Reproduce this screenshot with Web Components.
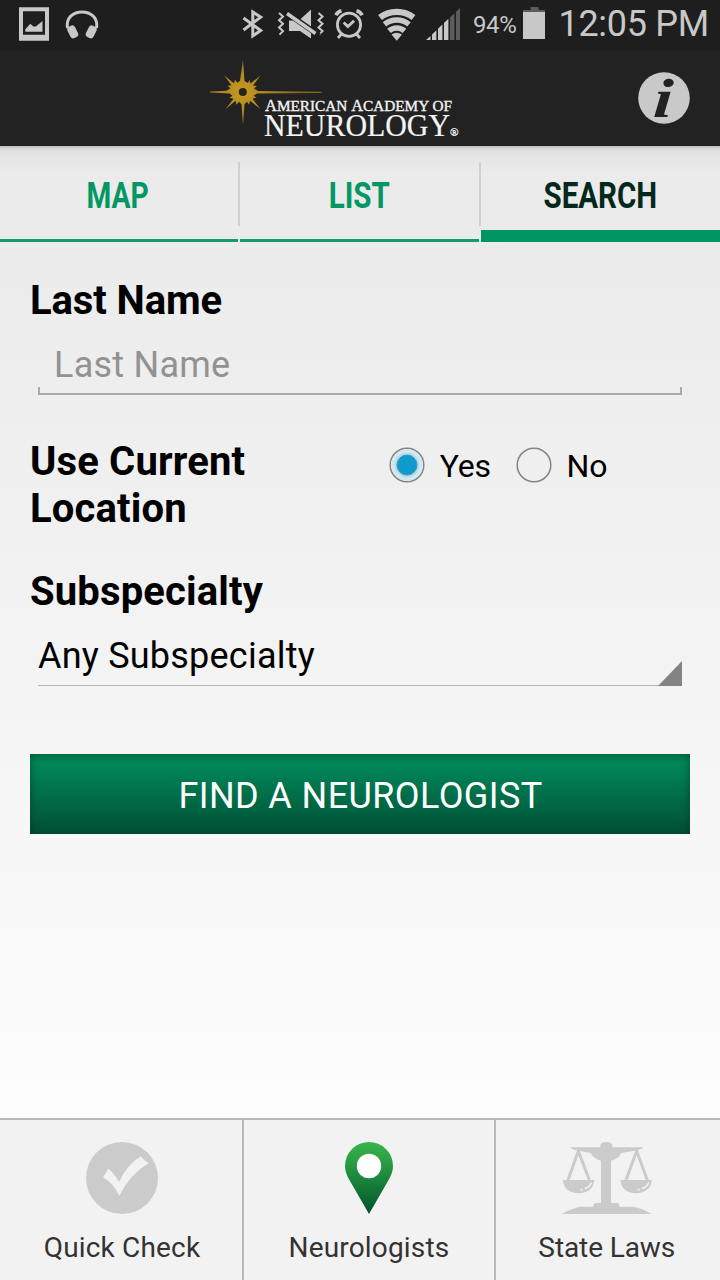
<!DOCTYPE html>
<html lang="en">
<head>
<meta charset="utf-8">
<title>Find a Neurologist</title>
<style>
html,body{margin:0;height:100%}
body{font-family:Roboto,"Noto Sans",sans-serif;color:#000}
</style>
</head>
<body>
<neuro-app></neuro-app>
<script>
const define = (name, html) => customElements.define(name, class extends HTMLElement {
  constructor() {
    super();
    const t = document.createElement('template');
    t.innerHTML = html;
    this.attachShadow({mode: 'open'}).append(t.content.cloneNode(true));
  }
});

define('status-bar', `
<style>
:host{display:flex;height:50px;background:#1e1e1e;color:#c8c8c8;box-sizing:border-box;padding:0 0 0 19px;align-items:flex-start}
svg{display:block;flex:none;fill:#c8c8c8}
.l{fill:none;stroke:#c8c8c8}
.bt{margin-left:143px}
.pct{font-size:24px;line-height:28px;margin:11px 0 0 13px;width:50px;letter-spacing:-.4px}
.time{font-size:36px;line-height:42px;margin:3px 0 0 12.500px;letter-spacing:-.3px;white-space:nowrap}
</style>
<svg width="30" height="50" viewBox="19 0 30 50"><path fill-rule="evenodd" d="M19 7.3h30v33.4H19zM23 11.3v23.4h22V11.3z"/><path d="M25.3 31.7v-2.5l5-5.4 3 2.8 2.6-.2 6.6-5.4v10.7z"/></svg>
<svg style="margin-left:16px" width="34" height="50" viewBox="65 0 34 50"><path class="l" stroke-width="3" d="M67.5 28C64 6.500 100 6.500 96.500 28"/><rect x="-4" y="-6.300" width="8.400" height="12.500" rx="3.200" transform="translate(72.600 32) rotate(-27)"/><rect x="-4.400" y="-6.300" width="8.400" height="12.500" rx="3.200" transform="translate(91.400 32) rotate(27)"/></svg>
<svg class="bt" width="22" height="50" viewBox="242 0 22 50"><path class="l" stroke-width="3" d="M243.500 18L260.700 30.500L252.800 36V12L260.700 17.200L243.500 30"/></svg>
<svg style="margin-left:13px" width="48" height="50" viewBox="277 0 48 50"><path class="l" stroke-width="2" d="M279 13l4 3.500-4 3.700 4 3.600-4 3.700 4 3.600-3.500 3.500M318.500 13l4 3.500-4 3.700 4 3.600-4 3.700 4 3.600-3.500 3.500"/><path d="M289 20.500h10l12-11v29l-11-7.500H289z"/><path fill="none" stroke="#1e1e1e" stroke-width="5.800" d="M285 11.500L319 35.500"/><path class="l" stroke-width="3.500" d="M287 13.500L315.500 33.500"/></svg>
<svg style="margin-left:9px" width="30" height="50" viewBox="334 0 30 50"><circle class="l" stroke-width="2.800" cx="349" cy="24.800" r="11.600"/><path class="l" stroke-width="2.800" d="M343.700 22.500l4.200 4 6.200-5.700M341.500 34l-3.500 4M356.500 34l3.500 4"/><path class="l" stroke-width="3.600" d="M336 15.300q1.500-3.500 5.500-4.500M362 15.300q-1.500-3.500-5.500-4.500"/></svg>
<svg style="margin-left:13px" width="40" height="50" viewBox="377 0 40 50"><path class="l" stroke-width="6.300" d="M380 17.500a28 28 0 0 1 33.500 0"/><path class="l" stroke-width="5.600" d="M384.500 24.400a19.500 19.500 0 0 1 24.500 0M389 30.800a12 12 0 0 1 15.500 0"/><path d="M391.500 34.400q5-3.200 10.500 0l-5.250 6.300z"/></svg>
<svg style="margin-left:9px" width="34" height="50" viewBox="426 0 34 50"><path d="M426 40l4.500-4v4zM432 40v-5.500l4.400-4.300V40zM438 40V28.800l4.400-4.300V40zM444 40V23l4.400-4.200V40z"/><path fill="#5c5c5c" d="M450 40V17.400l4.400-4.200V40zM456 40V11.800l4-3.800v32z"/></svg>
<span class="pct">94%</span>
<svg width="23" height="50" viewBox="523 0 23 50"><path fill="#5c5c5c" d="M523 10h7.500V7h8v3h6.500v3H523z"/><path d="M523 12h22v27H523z"/></svg>
<span class="time">12:05 PM</span>`);

define('app-header', `
<style>
:host{display:grid;grid-template-columns:1fr auto;align-items:center;height:96px;background:#222;padding:0 30px 0 209px;box-sizing:border-box;font-family:"Liberation Serif",serif;position:relative;z-index:1}
svg{display:block}
</style>
<svg width="252" height="96" viewBox="209 50 252 96" fill="#f4f4f4">
<defs><radialGradient id="g" gradientUnits="userSpaceOnUse" cx="242.500" cy="92" r="60"><stop offset="0" stop-color="#c99a20"/><stop offset=".4" stop-color="#a98423"/><stop offset="1" stop-color="#80651e"/></radialGradient></defs>
<path fill="url(#g)" d="M243 60l1.500 21 3.500 2 1.500-3 1 3.500 10-8-7.500 10 4 .5-3 2.500 4 2.500 63.500.7v1.200L257 93.500l-3.500 2.200 3 2-4 1 8 10.500-10.500-8.500-1 4-2-3-2.500 2.500-1.500 21-1.500-21-2.500-2.500-2.500 3-1-4-10 8.500 8-10.500-4-1 3-2-3-2.200L210 92.600v-1.200l16.500-.7 4-2.500-3-2.500 4-.5-7.500-10 10 8 1-3.500 2.500 3 2.500-2z"/>
<circle cx="242.800" cy="92" r="4" fill="#262318"/>
<text x="265" y="110.800" font-size="16.500" stroke="#f4f4f4" stroke-width=".35" textLength="187" lengthAdjust="spacingAndGlyphs">A<tspan font-size="15.300">MERICAN </tspan>A<tspan font-size="15.300">CADEMY OF</tspan></text>
<text x="264" y="135.600" font-size="31.500" stroke="#f4f4f4" stroke-width=".2" textLength="186" lengthAdjust="spacingAndGlyphs">NEUROLOGY</text>
<text x="450" y="135.800" font-size="11" stroke="#f4f4f4" stroke-width=".3" textLength="8.500" lengthAdjust="spacingAndGlyphs">®</text>
</svg>
<svg width="52" height="96" viewBox="638 50 52 96"><circle cx="664" cy="98" r="25.800" fill="#c9c9c9"/><text transform="translate(652.500 116.500) skewX(-4) scale(1.250 1)" font-size="55" font-weight="bold" font-style="italic" fill="#222">i</text></svg>`);

define('tab-item', `
<style>
:host{position:relative;display:flex;justify-content:center;align-items:center;height:96px;box-sizing:border-box;padding-top:7px;border-bottom:3px solid #169c6c;color:#059763;font-size:36px;font-weight:bold}
:host([selected]){border-bottom:12px solid #009562;padding-top:16px;color:#04291c}
:host(:not([selected]))::after{content:"";position:absolute;right:-2px;top:16px;width:2px;height:64px;background:#d0d0d0}
span{transform:scaleX(var(--sx,.82));line-height:42px}
</style><span><slot></slot></span>`);

define('form-label', `
<style>:host{display:block;font-size:40px;font-weight:bold;line-height:47px;letter-spacing:var(--ls,.15px)}</style><slot></slot>`);

define('text-field', `
<style>
:host{display:block;position:relative;height:51px;box-sizing:border-box;margin:0 8px;padding-left:16px;border-bottom:2px solid #a9a9a9;font-size:36px;line-height:42px;letter-spacing:.25px;color:#929292}
:host::before,:host::after{content:"";position:absolute;bottom:0;left:0;width:2px;height:6px;background:#a9a9a9}
:host::after{left:auto;right:0}
</style><slot></slot>`);

define('select-field', `
<style>
:host{display:flex;justify-content:space-between;align-items:flex-end;height:51px;box-sizing:border-box;margin:0 8px;border-bottom:1.500px solid #b4b4b4;font-size:36px;line-height:42px;letter-spacing:.22px}
span{align-self:flex-start}
i{width:24px;height:25px;margin-bottom:-1px;background:#838383;clip-path:polygon(100% 0,100% 100%,0 100%)}
</style><span><slot></slot></span><i></i>`);

define('radio-option', `
<style>
:host{display:flex;align-items:center;gap:15px;font-size:32px;line-height:38px}
:host(:not([checked])){gap:14px}
svg{display:block}span{position:relative;top:.6px}.on{display:none}:host([checked]) .on{display:inline}
</style>
<svg width="36" height="36" viewBox="0 0 36 36"><circle cx="18" cy="18" r="16.800" fill="none" stroke="#858585" stroke-width="1.500"/><g class="on"><circle cx="18" cy="18" r="15.800" fill="#d3e9f2"/><circle cx="18" cy="18" r="12.500" fill="#b1dcec"/><circle cx="18" cy="18" r="10" fill="#109bce" stroke="#4d91ae" stroke-width="1"/></g></svg><span><slot></slot></span>`);

define('action-button', `
<style>:host{display:flex;align-items:center;justify-content:center;height:80px;background:linear-gradient(#008f5e,#004f35);box-shadow:inset 0 2px 8px rgba(0,45,30,.6);color:#fff;font-size:36px;letter-spacing:.4px;padding:4px 0 0 1px;box-sizing:border-box}</style><span><slot></slot></span>`);

define('nav-item', `
<style>
:host{display:flex;flex-direction:column;align-items:center;background:#f2f2f2;color:#333;font-size:28px;line-height:33px;letter-spacing:var(--ls,.17px);padding-top:22px;gap:17px;box-sizing:border-box}
::slotted(svg){display:block;height:72px}
</style><slot name="icon"></slot><span><slot></slot></span>`);

define('neuro-app', `
<style>
:host{display:flex;flex-direction:column;width:720px;height:1280px;overflow:hidden;background:linear-gradient(#ebebeb 200px,#f1f1f1 550px,#f4f4f4 700px,#fdfdfd 1110px)}
.tabs{display:grid;grid-template-columns:238px 239px 239px;gap:2px;height:96px;background:linear-gradient(#bcbcbc,#dcdcdc 3px,#e3e3e3 8px,#ebebeb 26px)}
form{display:flex;flex-direction:column;padding:35px 30px 0;flex:1}
.loc{display:flex;justify-content:space-between;align-items:flex-start;margin:43px 0 36px}
.loc form-label{width:240px}
.radios{display:flex;gap:25.500px;padding:8px 82.500px 0 0}
radio-option[checked]{letter-spacing:-.2px}
action-button{margin-top:68px}
nav{display:grid;grid-template-columns:242px 250px 224px;gap:2px;height:162px;box-sizing:border-box;border-top:2px solid #b9b9b9;background:#b9b9b9}
</style>
<status-bar></status-bar>
<app-header></app-header>
<div class="tabs"><tab-item style="--sx:.785;padding-right:2px">MAP</tab-item><tab-item style="padding-right:1px">LIST</tab-item><tab-item selected>SEARCH</tab-item></div>
<form>
<form-label style="--ls:-.1px">Last Name</form-label>
<text-field style="margin-top:20px">Last Name</text-field>
<div class="loc"><form-label>Use Current Location</form-label><div class="radios"><radio-option checked>Yes</radio-option><radio-option>No</radio-option></div></div>
<form-label>Subspecialty</form-label>
<select-field style="margin-top:20px">Any Subspecialty</select-field>
<action-button>FIND A NEUROLOGIST</action-button>
</form>
<nav>
<nav-item style="padding-left:2px"><svg slot="icon" width="72" height="72" viewBox="258 126 216 216"><circle cx="366" cy="234" r="108" fill="#cbcbcb"/><path fill="#f2f2f2" d="M309 232L325 206Q343 219 357 246Q380 195 422 169Q432 182 446 190Q390 222 358 288Q343 252 309 232z"/></svg>Quick Check</nav-item>
<nav-item><svg slot="icon" width="48" height="72" viewBox="0 0 48 72"><defs><linearGradient id="p" x2="0" y2="1"><stop offset="0" stop-color="#39b54a"/><stop offset=".25" stop-color="#2ba044"/><stop offset="1" stop-color="#00522d"/></linearGradient></defs><path fill="url(#p)" d="M24 0A24 24 0 0 1 48 24Q48 31 43 39L24 72L5 39Q0 31 0 24A24 24 0 0 1 24 0z"/><circle cx="24" cy="24" r="12.200" fill="#fff"/></svg>Neurologists</nav-item>
<nav-item style="padding-right:2.500px;--ls:-.1px"><svg slot="icon" width="92" height="72" viewBox="213 96 276 216" fill="#cbcbcb"><path d="M241 112H331V106Q333 96 349 96Q365 96 367 106V112H460Q454 120 442 121L394 129Q386 146 363 152V279H382Q388 280 388 290H430Q460 296 484 312H215Q240 297 268 290H310Q310 280 316 279H333V152Q310 146 302 129L258 121Q246 119 241 112z"/><path fill="none" stroke="#cbcbcb" stroke-width="9" d="M234 210L265 123L298 210M408 210L440 123L472 210"/><path d="M218 210H313Q309 249 265 250Q224 249 218 210zM391 210H486Q480 249 438 250Q396 249 391 210z"/><path fill="none" stroke="#f2f2f2" stroke-width="5" stroke-linecap="round" d="M286 235Q299 231 303 220M274 239h1M458 235Q471 231 475 220M446 239h1"/></svg>State Laws</nav-item>
</nav>`);
</script>
</body>
</html>
